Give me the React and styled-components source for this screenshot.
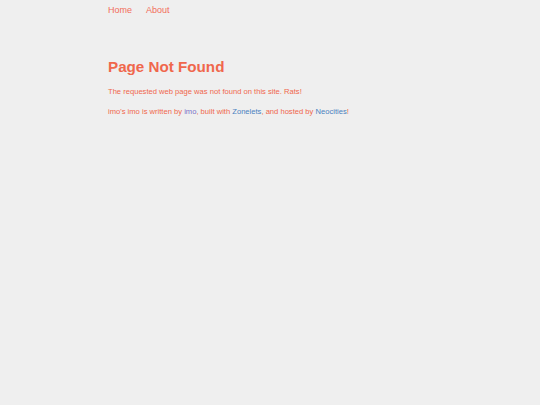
import React from 'react';
import styled, { createGlobalStyle } from 'styled-components';

const GlobalStyle = createGlobalStyle`
    html, body {
        margin: 0;
        background: #efefef;
    }
    body {
        font-family: "Liberation Sans", Arial, sans-serif;
        color: #f0674c;
    }
`;

const Page = styled.div`
    width: 60%;
    margin: 0 auto;
    padding-top: 4px;
`;

const Nav = styled.nav`
    display: flex;
    gap: 14px;
    font-size: 9px;
    line-height: 12px;

    a {
        color: #f26d5a;
        text-decoration: none;
    }
`;

const Heading = styled.h1`
    margin: 39px 0 0;
    font-size: 15.2px;
    line-height: 23px;
    font-weight: bold;
`;

const Text = styled.p`
    margin: 8px 0 0;
    font-size: 7.6px;
    line-height: 12px;
`;

const Link = styled.a`
    color: ${p => (p.$visited ? '#7a6fc8' : '#4a7fc0')};
    text-decoration: none;
`;

const App = () => (
    <>
        <GlobalStyle />
        <Page>
            <Nav>
                <a href="#">Home</a>
                <a href="#">About</a>
            </Nav>
            <Heading>Page Not Found</Heading>
            <Text>The requested web page was not found on this site. Rats!</Text>
            <Text>
                imo's imo is written by <Link $visited href="#">imo</Link>, built with{' '}
                <Link href="#">Zonelets</Link>, and hosted by <Link href="#">Neocities</Link>!
            </Text>
        </Page>
    </>
);

export default App;
